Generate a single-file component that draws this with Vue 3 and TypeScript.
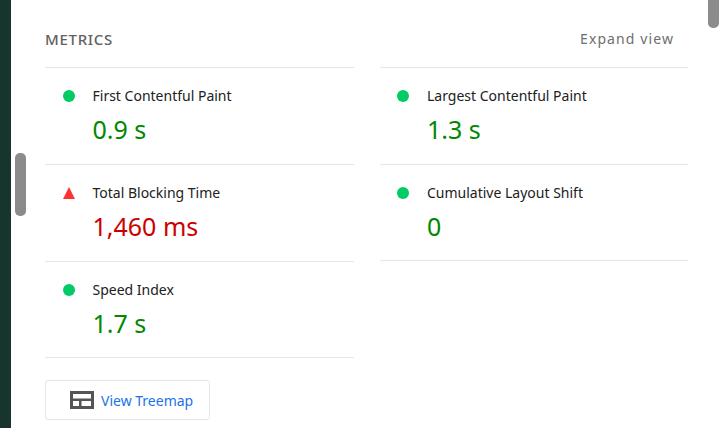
<script setup lang="ts">
interface Metric { label: string; value: string; bad?: boolean }
const left: Metric[] = [
  { label: 'First Contentful Paint', value: '0.9 s' },
  { label: 'Total Blocking Time', value: '1,460 ms', bad: true },
  { label: 'Speed Index', value: '1.7 s' },
]
const right: Metric[] = [
  { label: 'Largest Contentful Paint', value: '1.3 s' },
  { label: 'Cumulative Layout Shift', value: '0' },
]
const columns = [left, right]
</script>

<template>
  <div class="page">
    <div class="strip"></div>
    <div class="gutter"><div class="thumb left-thumb"></div></div>
    <main class="content">
      <header class="head">
        <h2 class="title">METRICS</h2>
        <span class="expand">Expand view</span>
      </header>
      <div class="grid">
        <div v-for="(col, i) in columns" :key="i" class="col">
          <div v-for="m in col" :key="m.label" class="metric">
            <span class="icon">
              <svg v-if="m.bad" class="tri" viewBox="0 0 12 12"><path d="M6 0 12 12H0Z" fill="#f33" /></svg>
              <span v-else class="dot"></span>
            </span>
            <div class="body">
              <div class="label">{{ m.label }}</div>
              <div class="value" :class="{ bad: m.bad }">{{ m.value }}</div>
            </div>
          </div>
        </div>
      </div>
      <button class="treemap" type="button">
        <svg class="tm-icon" viewBox="0 0 24 18">
          <path fill="#555" fill-rule="evenodd" d="M0 0H24V18H0ZM3 3V7.5H21V3ZM3 10V15H9V10ZM11.5 10V15H21V10Z" />
        </svg>
        <span>View Treemap</span>
      </button>
    </main>
    <div class="right-rail"><div class="thumb right-thumb"></div></div>
  </div>
</template>

<style>
html, body { margin: 0; background: #fff; }
</style>

<style scoped>
.page {
  display: flex;
  width: 722px;
  height: 428px;
  overflow: hidden;
  background: #fff;
  font-family: "Noto Sans", "Open Sans", sans-serif;
}
.strip { width: 11px; flex: none; background: #17352c; }
.gutter { width: 34px; flex: none; padding: 153px 0 0 4px; box-sizing: border-box; }
.thumb { width: 11px; background: #8b8b8b; }
.left-thumb { height: 63px; border-radius: 5px; }
.content { width: 643px; flex: none; }
.head {
  height: 67px;
  box-sizing: border-box;
  display: flex;
  justify-content: space-between;
  align-items: center;
  padding: 10px 14px 0 0;
}
.title {
  margin: 0;
  font-size: 15px;
  font-weight: 500;
  letter-spacing: 0.7px;
  color: #616161;
}
.expand { font-size: 14px; letter-spacing: 1.1px; color: #6e6e6e; }
.grid { display: flex; gap: 26px; }
.col { width: 308.5px; flex: none; border-top: 1px solid #e6e6e6; }
.col:first-child { margin-top: 0.3px; }
.metric {
  display: flex;
  box-sizing: border-box;
  height: 96.67px;
  border-bottom: 1px solid #e6e6e6;
}
.icon { width: 47.5px; flex: none; display: flex; justify-content: center; padding-top: 22px; height: 12px; }
.dot { width: 12px; height: 12px; border-radius: 50%; background: #0c6; }
.tri { width: 12px; height: 12px; display: block; }
.label { padding-top: 18px; font-size: 14px; line-height: 20px; color: #212121; }
.value { margin-top: 7px; font-size: 25px; line-height: 32px; color: #080; }
.value.bad { color: #c00; }
.treemap {
  margin-top: 22px;
  width: 165px;
  height: 40px;
  display: flex;
  align-items: center;
  gap: 7px;
  padding: 0 0 0 24px;
  box-sizing: border-box;
  background: #fff;
  border: 1px solid #e6e6e6;
  border-radius: 3px;
  font: inherit;
  font-size: 14px;
  color: #1a73e8;
}
.tm-icon { width: 24px; height: 18px; flex: none; }
.right-rail { flex: 1; padding-left: 20px; }
.right-thumb { height: 28px; border-radius: 0 0 5px 5px; }
</style>
